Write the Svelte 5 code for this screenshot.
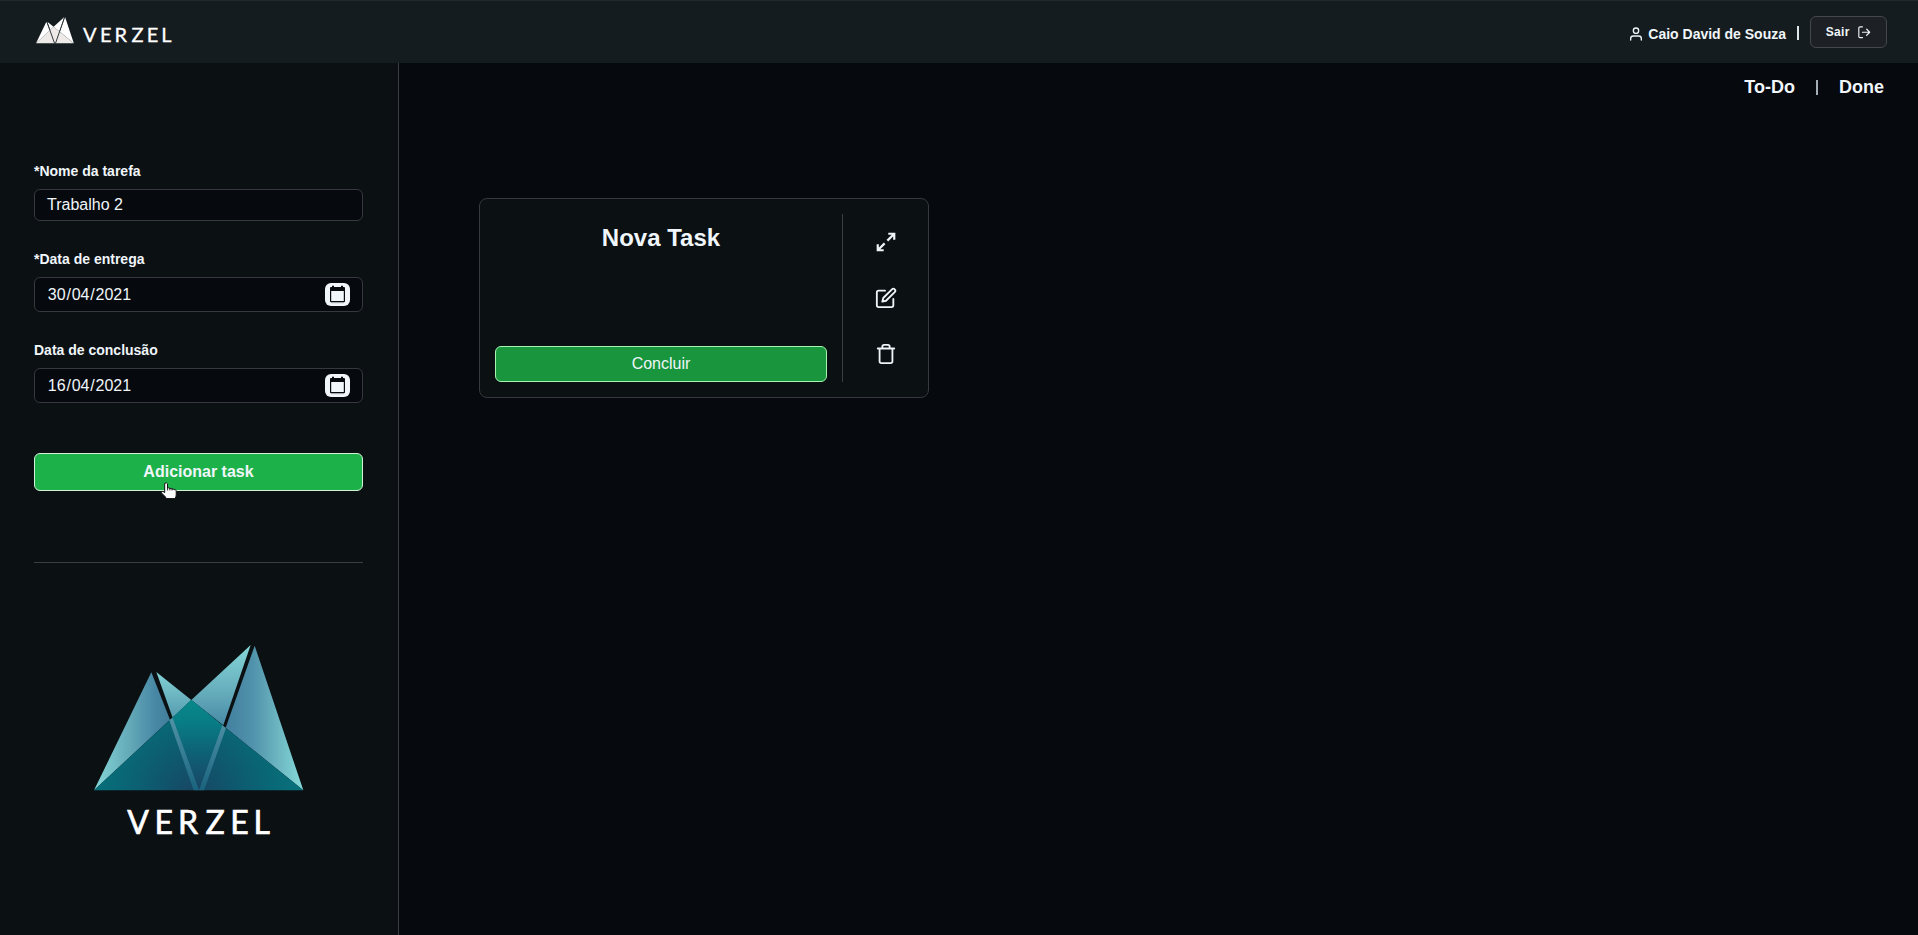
<script>
  const letters = [
    ['V', 0], ['E', 1], ['R', 2], ['Z', 3], ['E', 4], ['L', 5]
  ];
  const smallX = [83, 100, 114.6, 131.4, 146.8, 161.2];
  const largeX = [127.3, 154.6, 178, 205.4, 230.2, 253.4];
  const dates = [
    { label: '*Data de entrega', parts: ['30', '04', '2021'] },
    { label: 'Data de conclusão', parts: ['16', '04', '2021'] }
  ];
</script>

<div class="page">
  <header>
    <svg class="brand" width="140" height="34" viewBox="35 15 140 34">
      <g transform="translate(33.5 14.4) scale(.0602)">
        <path fill="#fff" d="M214 124 270 266 42 478ZM229 123 334 207 278 260ZM512 42 430 282 334 207ZM524 44 670 478 437 290Z" />
        <path fill="#edeae8" d="M334 207 670 478H42Z" />
        <path d="M221 120 349 478 366 478 518 42" fill="none" stroke="#2b3336" stroke-width="16" />
      </g>
      <text class="word" y="42.300" font-size="20" stroke-width=".3">
        {#each letters as [ch, i]}<tspan x={smallX[i]}>{ch}</tspan>{/each}
      </text>
    </svg>
    <div class="account">
      <svg class="line" width="16" height="16" viewBox="0 0 24 24"><path d="M20 21v-2a4 4 0 0 0-4-4H8a4 4 0 0 0-4 4v2" /><circle cx="12" cy="7" r="4" /></svg>
      <span class="name">Caio David de Souza</span>
      <span class="bar"></span>
      <button class="exit">Sair
        <svg class="line" width="14.500" height="14.500" viewBox="0 0 24 24"><path d="M9 21H5a2 2 0 0 1-2-2V5a2 2 0 0 1 2-2h4M16 17l5-5-5-5M21 12H9" /></svg>
      </button>
    </div>
  </header>

  <div class="body">
    <aside>
      <div class="label first">*Nome da tarefa</div>
      <div class="field name-field">Trabalho 2</div>
      {#each dates as d}
        <div class="label">{d.label}</div>
        <div class="field date">
          <div><span>{d.parts[0]}</span>/<span>{d.parts[1]}</span>/<span>{d.parts[2]}</span></div>
          <svg width="25" height="23" viewBox="0 0 25 23">
            <rect width="25" height="23" rx="6" fill="#f0f6fa" />
            <path fill="#080b0e" fill-rule="evenodd" d="M7 2.700h2V4h7V2.700h2V4h1q1 0 1 1v13.200q0 1-1 1H6q-1 0-1-1V5q0-1 1-1h1ZM6.200 8v10h12.600V8Z" />
            <path d="M6 19.700h13" stroke="#9ba0a4" stroke-width=".8" />
          </svg>
        </div>
      {/each}
      <div class="add-wrap">
        <button class="add">Adicionar task</button>
        <svg class="cursor" width="18" height="19" viewBox="0 0 18 19">
          <path d="M5 1.200q1.500-.9 2.500.6V6q1.300-.7 2.200.5 1.400-.6 2.200.5 1.400-.5 2 .6 1.900-.4 2.300 1.200V13q0 2-1.300 3.600H6.400Q5 13.600 2 11.700.7 10.300 2.200 9.600 3.500 9.400 4.700 10.600V2Z" fill="#fff" stroke="#111" stroke-width="1" />
          <path d="M7.600 5.500v3M9.900 6v2.500M12.100 6.500v2" stroke="#111" stroke-width=".9" />
        </svg>
      </div>
      <hr />
      <svg class="logo" width="211" height="204" viewBox="39 42 633 612">
        <defs>
          <linearGradient id="l" x1="42" x2="270" y1="0" y2="0" gradientUnits="userSpaceOnUse"><stop stop-color="#86d8d8" /><stop offset=".45" stop-color="#65abb9" /><stop offset=".8" stop-color="#4888a5" /><stop offset="1" stop-color="#427d9b" /></linearGradient>
          <linearGradient id="r" x1="437" x2="670" y1="0" y2="0" gradientUnits="userSpaceOnUse"><stop stop-color="#427f9f" /><stop offset=".35" stop-color="#5092ab" /><stop offset=".65" stop-color="#6ab3bf" /><stop offset="1" stop-color="#86dada" /></linearGradient>
          <linearGradient id="a" x1="0" x2="0" y1="123" y2="262" gradientUnits="userSpaceOnUse"><stop stop-color="#83d1d4" /><stop offset="1" stop-color="#559bae" /></linearGradient>
          <linearGradient id="b" x1="0" x2="0" y1="42" y2="282" gradientUnits="userSpaceOnUse"><stop stop-color="#85d7d8" /><stop offset=".6" stop-color="#65acbb" /><stop offset="1" stop-color="#4789a5" /></linearGradient>
          <radialGradient id="c" cx="345" cy="490" r="310" gradientUnits="userSpaceOnUse"><stop stop-color="#194563" /><stop offset=".3" stop-color="#10546b" /><stop offset=".7" stop-color="#096675" /><stop offset="1" stop-color="#08717b" /></radialGradient>
          <linearGradient id="m" x1="0" x2="0" y1="207" y2="478" gradientUnits="userSpaceOnUse"><stop stop-color="#08898b" /><stop offset=".25" stop-color="#087c84" /><stop offset=".6" stop-color="#0e6074" /><stop offset="1" stop-color="#1a4565" /></linearGradient>
          <linearGradient id="s" x1="0" x2="0" y1="262" y2="478" gradientUnits="userSpaceOnUse"><stop stop-color="#5192a5" /><stop offset=".5" stop-color="#367c94" /><stop offset="1" stop-color="#1a637d" /></linearGradient>
        </defs>
        <path fill="url(#l)" d="M214 124 270 266 42 478Z" />
        <path fill="url(#a)" d="M229 123 334 207 278 260Z" />
        <path fill="url(#b)" d="M512 42 430 283 334 207Z" />
        <path fill="url(#r)" d="M524 44 670 478 437 290Z" />
        <path fill="url(#c)" d="M334 207 670 478H42Z" />
        <path fill="url(#m)" d="M334 207 430 285 358 478 278 260Z" />
        <path fill="url(#s)" d="M268 268 278 260 357 478H341ZM427 283 438 291 372 478H357Z" />
        <text class="word" y="610" font-size="96" stroke-width="2">
          {#each letters as [ch, i]}<tspan x={(largeX[i] - 80) * 3}>{ch}</tspan>{/each}
        </text>
      </svg>
    </aside>

    <main>
      <nav><span>To-Do</span><i></i><span>Done</span></nav>
      <section class="card">
        <div class="task">
          <h2>Nova Task</h2>
          <button class="finish">Concluir</button>
        </div>
        <div class="tools">
          <svg class="line square" width="22" height="22" viewBox="0 0 24 24"><path d="M14.500 3H21v6.500M21 3l-7.500 7.500M3 14.500V21h6.500M3 21l7.500-7.500" /></svg>
          <svg class="line" width="22" height="22" viewBox="0 0 24 24"><path d="M11 4H4a2 2 0 0 0-2 2v14a2 2 0 0 0 2 2h14a2 2 0 0 0 2-2v-7M18.500 2.500a2.121 2.121 0 0 1 3 3L12 15l-4 1 1-4z" /></svg>
          <svg class="line" width="22" height="22" viewBox="0 0 24 24"><path d="M3 6h18M19 6v14a2 2 0 0 1-2 2H7a2 2 0 0 1-2-2V6M8 6V4a2 2 0 0 1 2-2h4a2 2 0 0 1 2 2v2" /></svg>
        </div>
      </section>
    </main>
  </div>
</div>

<style>
  :global(body) { margin: 0; background: #06090e; }
  * { box-sizing: border-box; }
  .page {
    height: 935px; display: flex; flex-direction: column; overflow: hidden;
    font-family: "Liberation Sans", Arial, sans-serif; color: #f0f6fa;
  }
  header {
    height: 63px; flex: none; display: flex; justify-content: space-between;
    background: #151c1f; border-top: 1px solid #22292c; padding: 14px 31px 0 35px;
  }
  .word { fill: #fff; stroke: #fff; font-family: Lato, sans-serif; }
  svg { display: block; flex: none; }
  .line { fill: none; stroke: #eef4f7; stroke-width: 2; stroke-linecap: round; stroke-linejoin: round; }
  .square { stroke-width: 2.400; stroke-linecap: butt; stroke-linejoin: miter; }
  .account { display: flex; height: 34px; margin-top: 1px; }
  .account > svg { margin-top: 9.500px; }
  .name { font: bold 14px/16px "Liberation Sans", Arial, sans-serif; margin: 10px 0 0 4px; }
  .bar { width: 2px; height: 14px; background: #dfe6ea; margin: 10px 11px 0 11px; }
  button { font-family: inherit; color: #f0f6fa; border-radius: 6px; padding: 0; }
  .exit {
    width: 77px; height: 32px; display: flex; align-items: center; justify-content: center; gap: 7px;
    background: #1d2126; border: 1px solid #44474b; font-size: 12px; font-weight: bold; letter-spacing: .3px;
  }
  .exit .line { stroke-width: 1.900; }
  .body { flex: 1; display: flex; min-height: 0; }
  aside {
    width: 399px; flex: none; padding: 100px 35px 0 34px; background: #0b1013;
    border-right: 1px solid #3b3e43; display: flex; flex-direction: column;
  }
  .label { font-size: 14px; line-height: 16px; font-weight: bold; margin: 30px 0 10px; }
  .first { margin-top: 0; }
  .field {
    height: 35px; border: 1px solid #36393d; border-radius: 6px; background: #06090e;
    font-size: 16px; padding: 0 12px; display: flex; align-items: center; justify-content: space-between;
  }
  .name-field { height: 32px; padding-bottom: 1px; }
  .date + .label { margin-top: 30px; }
  .date span { padding: 0 .8px; }
  .add-wrap { position: relative; margin-top: 50px; }
  .add {
    display: block; width: 100%; height: 38px; background: #1db14a; border: 1px solid #d0f3d8;
    font-size: 16px; font-weight: bold;
  }
  .cursor { position: absolute; left: 126px; top: 29px; }
  hr { width: 100%; height: 1px; flex: none; border: 0; background: #3b3e43; margin: 71px 0 81.500px; }
  .logo { align-self: center; }
  main { flex: 1; display: flex; flex-direction: column; align-items: flex-start; padding: 12px 34px 0 80px; }
  nav { align-self: flex-end; height: 24px; display: flex; align-items: center; font-size: 18px; font-weight: bold; }
  nav i { width: 2px; height: 15px; background: #a5adb4; margin: 0 21px 0 21px; }
  .card {
    width: 450px; height: 200px; margin-top: 99px; padding: 15px; display: flex;
    background: #0b1013; border: 1px solid #36393d; border-radius: 8px;
  }
  .task {
    width: 348px; padding-right: 15px; border-right: 1px solid #3b3e43;
    display: flex; flex-direction: column; justify-content: space-between;
  }
  h2 { font-size: 24px; line-height: 28px; margin: 10px 0 0; text-align: center; }
  .finish { height: 36px; background: #18953d; border: 1px solid #a6f5b1; font-size: 16px; }
  .tools { flex: 1; display: flex; flex-direction: column; align-items: center; justify-content: center; gap: 34px; padding-left: 16px; }
</style>
